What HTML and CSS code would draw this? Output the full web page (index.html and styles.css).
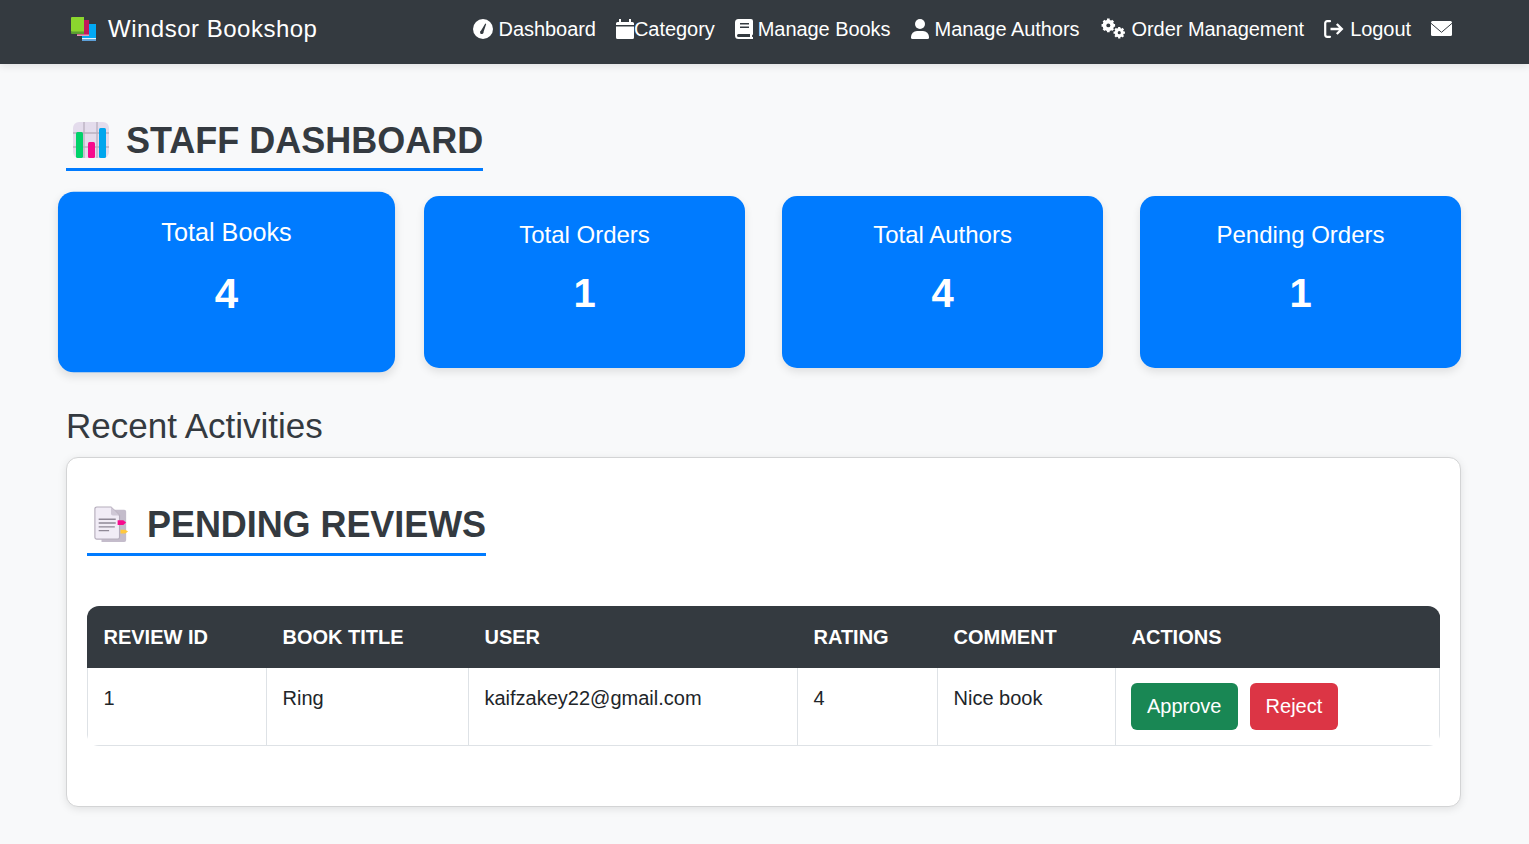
FILE: index.html
```html
<!DOCTYPE html>
<html lang="en">
<head>
    <meta charset="UTF-8">
    <meta name="viewport" content="width=device-width, initial-scale=1.0">
    <title>Staff Dashboard - Windsor Bookshop</title>
    <link rel="stylesheet" href="styles.css">
</head>
<body>
    <nav class="navbar">
        <a class="brand" href="#">
            <svg class="brand-icon" viewBox="0 0 25 24">
                <path fill="#03a9f4" d="M11 7h14v15.500H11z"/>
                <path fill="#e3f2fd" d="M11 21h14v1.500H11z"/>
                <path fill="#5c9fd8" d="M11 22.500h14V24H11z"/>
                <path fill="#c2185b" d="M6 3h12v16H6z"/>
                <path fill="#e0a0b8" d="M6 17.500h12V19H6z"/>
                <path fill="#8bd62e" d="M1 0h12v15H1a1 1 0 0 1-1-1V1a1 1 0 0 1 1-1z"/>
                <path fill="#5c9e31" d="M0 14.500h13V17H1a1 1 0 0 1-1-1z"/>
            </svg>
            Windsor Bookshop
        </a>
        <ul class="nav-links">
            <li>
                <a href="#">
                    <svg class="icon icon-gauge" viewBox="0 0 20 20"><circle cx="10" cy="10" r="10" fill="#fff"/><path fill="#343a40" d="M8.100 11.600 12.300 4.600l.9.400-2.600 7.800a1.800 1.800 0 1 1-2.500-1.200z"/></svg>
                    Dashboard
                </a>
            </li>
            <li>
                <a href="#">
                    <svg class="icon icon-cal" viewBox="0 0 18 20"><path fill="#fff" d="M3 0h2v3h8V0h2v3h1.500A1.500 1.500 0 0 1 18 4.500V6H0V4.500A1.500 1.500 0 0 1 1.500 3H3zM0 7.500h18v11a1.500 1.500 0 0 1-1.500 1.500h-15A1.500 1.500 0 0 1 0 18.500z"/></svg>
                    Category
                </a>
            </li>
            <li>
                <a href="#">
                    <svg class="icon icon-book" viewBox="0 0 18 20"><path fill="#fff" fill-rule="evenodd" d="M3.500 0H16a2 2 0 0 1 2 2v13.500l-.9.500v2h.9v2H3.500A3.500 3.500 0 0 1 0 16.500v-13A3.500 3.500 0 0 1 3.500 0zM5 4v1.500h9V4zm0 3.500V9h9V7.500zM3.500 15a1.500 1.500 0 0 0 0 3H15v-3z"/></svg>
                    Manage Books
                </a>
            </li>
            <li>
                <a href="#">
                    <svg class="icon icon-user" viewBox="0 0 18 20"><circle cx="9" cy="5" r="5" fill="#fff"/><path fill="#fff" d="M6 12h6a6 6 0 0 1 6 6v.500a1.500 1.500 0 0 1-1.500 1.500h-15A1.500 1.500 0 0 1 0 18.500V18a6 6 0 0 1 6-6z"/></svg>
                    Manage Authors
                </a>
            </li>
            <li>
                <a href="#">
                    <svg class="icon icon-cogs" viewBox="0 0 25 20">
                        <circle cx="8" cy="7" r="4" fill="none" stroke="#fff" stroke-width="3"/>
                        <path stroke="#fff" stroke-width="2.600" d="M8 .500v13M1.500 7h13M3.400 2.400l9.200 9.200M12.600 2.400l-9.200 9.200"/>
                        <circle cx="8" cy="7" r="1.900" fill="#343a40"/>
                        <circle cx="18.500" cy="14" r="3.100" fill="none" stroke="#fff" stroke-width="2.600"/>
                        <path stroke="#fff" stroke-width="2.200" d="M18.500 8.500v11M13 14h11M14.600 10.100l7.800 7.800M22.400 10.100l-7.800 7.800"/>
                        <circle cx="18.500" cy="14" r="1.500" fill="#343a40"/>
                    </svg>
                    Order Management
                </a>
            </li>
            <li>
                <a href="#">
                    <svg class="icon icon-logout" viewBox="0 0 20 18"><path fill="none" stroke="#fff" stroke-width="2.200" stroke-linecap="round" d="M6 1.200H3.200a2 2 0 0 0-2 2v11.600a2 2 0 0 0 2 2H6"/><path fill="none" stroke="#fff" stroke-width="2.400" d="M6.500 9h11.300M12.800 4l5 5-5 5"/></svg>
                    Logout
                </a>
            </li>
            <li>
                <a href="#" aria-label="Messages">
                    <svg class="icon-mail" viewBox="0 0 21 15"><rect width="21" height="15" rx="1.500" fill="#fff"/><path fill="none" stroke="#343a40" d="M0 2.300l10.500 9 10.500-9"/></svg>
                </a>
            </li>
        </ul>
    </nav>

    <main class="content">
        <h2 class="section-title">
            <svg class="title-icon" viewBox="0 0 36 36">
                <rect width="36" height="36" rx="6" fill="#e4dcec"/>
                <path stroke="#b9b0bf" stroke-width="1.300" d="M11 0v36M24 0v36M0 11h36M0 25h36"/>
                <rect x="3" y="10" width="7" height="26" rx="1.500" fill="#00d26a"/>
                <rect x="15" y="20" width="7" height="16" rx="1.500" fill="#f70a8d"/>
                <rect x="26" y="6" width="7" height="30" rx="1.500" fill="#00a6ed"/>
            </svg>
            Staff Dashboard
        </h2>

        <section class="stats">
            <div class="stat-card stat-card-hover">
                <h3>Total Books</h3>
                <p>4</p>
            </div>
            <div class="stat-card">
                <h3>Total Orders</h3>
                <p>1</p>
            </div>
            <div class="stat-card">
                <h3>Total Authors</h3>
                <p>4</p>
            </div>
            <div class="stat-card">
                <h3>Pending Orders</h3>
                <p>1</p>
            </div>
        </section>

        <h3 class="recent-title">Recent Activities</h3>

        <section class="panel">
            <h2 class="section-title">
                <svg class="title-icon" viewBox="0 0 36 38">
                    <path fill="#c4bccb" d="M8 4h24a2 2 0 0 1 2 2v30a2 2 0 0 1-2 2H8z"/>
                    <path fill="#f1ecf6" stroke="#b5adbc" stroke-width="1.200" d="M3 1h15l9 9v23a2 2 0 0 1-2 2H3a2 2 0 0 1-2-2V3a2 2 0 0 1 2-2z"/>
                    <path fill="#cfc8d6" d="M18 1l9 9h-7a2 2 0 0 1-2-2z"/>
                    <path stroke="#8f8896" stroke-width="1.500" d="M5 14h18M5 18h18M5 22h17M5 26h11"/>
                    <path fill="#f70a8d" d="M25 15h6l3 2.500-3 2.500h-6z"/>
                    <path fill="#ffc83d" d="M28 25h5l3 2-3 2h-5z"/>
                </svg>
                Pending Reviews
            </h2>

            <table class="reviews">
                <colgroup>
                    <col class="col-id">
                    <col class="col-book">
                    <col class="col-user">
                    <col class="col-rating">
                    <col class="col-comment">
                    <col>
                </colgroup>
                <thead>
                    <tr>
                        <th>Review ID</th>
                        <th>Book Title</th>
                        <th>User</th>
                        <th>Rating</th>
                        <th>Comment</th>
                        <th>Actions</th>
                    </tr>
                </thead>
                <tbody>
                    <tr>
                        <td>1</td>
                        <td>Ring</td>
                        <td>kaifzakey22@gmail.com</td>
                        <td>4</td>
                        <td>Nice book</td>
                        <td class="actions">
                            <button class="btn btn-approve">Approve</button>
                            <button class="btn btn-reject">Reject</button>
                        </td>
                    </tr>
                </tbody>
            </table>
        </section>
    </main>
</body>
</html>
```

FILE: styles.css
```css
* {
    box-sizing: border-box;
}
body {
    font-family: "Liberation Sans", Arial, sans-serif;
    font-size: 20px;
    line-height: 1.5;
    background-color: #f8f9fa;
    color: #212529;
    margin: 0;
}
a {
    color: #fff;
    text-decoration: none;
}

.navbar {
    display: flex;
    align-items: center;
    justify-content: space-between;
    height: 64px;
    padding: 0 77px 7px 71px;
    background-color: #343a40;
    box-shadow: 0 2px 8px rgba(0, 0, 0, 0.1);
}
.brand {
    display: flex;
    align-items: center;
    font-size: 24px;
    letter-spacing: 0.5px;
    gap: 12px;
}
.brand-icon {
    width: 25px;
    height: 24px;
}
.nav-links {
    display: flex;
    align-items: center;
    gap: 20px;
    list-style: none;
    margin: 0;
    padding: 0;
    letter-spacing: -0.05px;
}
.nav-links a {
    display: flex;
    align-items: center;
}
.icon {
    height: 20px;
    margin-right: 6px;
}
.icon-gauge { width: 20px; }
.icon-cal { width: 18px; margin-right: 0; }
.icon-book { width: 18px; margin-right: 5px; }
.icon-user { width: 18px; }
.icon-cogs { width: 26px; height: 21px; }
.icon-logout { width: 20px; height: 18px; }
.icon-mail {
    width: 21px;
    height: 15px;
}

.content {
    padding: 55px 68px 37px 66px;
}
.section-title {
    display: inline-flex;
    align-items: center;
    gap: 17px;
    margin: 0;
    padding: 0 0 6px 7px;
    font-size: 36px;
    line-height: 43px;
    font-weight: 700;
    text-transform: uppercase;
    color: #343a40;
    border-bottom: 3px solid #007bff;
}
.title-icon {
    width: 36px;
    height: 36px;
    margin-bottom: 2px;
}

.stats {
    display: grid;
    grid-template-columns: repeat(4, 1fr);
    gap: 37px;
    margin-top: 25px;
}
.stat-card {
    height: 171.500px;
    padding: 20px;
    text-align: center;
    color: #fff;
    background-color: #007bff;
    border-radius: 15px;
    box-shadow: 0 4px 8px rgba(0, 0, 0, 0.1);
}
.stat-card-hover {
    transform: scale(1.05);
}
.stat-card h3 {
    margin: 0;
    font-size: 24px;
    line-height: 38px;
    font-weight: 400;
}
.stat-card p {
    margin: 15px 0 0;
    font-size: 40px;
    line-height: 48px;
    font-weight: 700;
}

.recent-title {
    margin: 37.500px 0 10px;
    font-size: 35px;
    line-height: 42px;
    font-weight: 400;
    color: #343a40;
}

.panel {
    height: 350px;
    padding: 45px 20px 0;
    background-color: #fff;
    border: 1px solid #d3d4d5;
    border-radius: 12px;
    box-shadow: 0 2px 8px rgba(0, 0, 0, 0.1);
}
.panel .section-title {
    gap: 18px;
    padding: 0 0 7px 6px;
    letter-spacing: -0.07px;
}

.reviews {
    width: 100%;
    margin-top: 50px;
    table-layout: fixed;
    border-collapse: collapse;
    border-radius: 12px;
    overflow: hidden;
}
.col-id { width: 179px; }
.col-book { width: 202px; }
.col-user { width: 329px; }
.col-rating { width: 140px; }
.col-comment { width: 178px; }
.reviews th {
    height: 61px;
    padding: 0 16px 0 15.500px;
    text-align: left;
    font-weight: 700;
    text-transform: uppercase;
    color: #fff;
    background-color: #343a40;
    border: 1px solid #343a40;
}
.reviews td {
    height: 77px;
    padding: 15px 16px 15px 15.500px;
    vertical-align: top;
    background-color: #fff;
    border: 1px solid #dee2e6;
}
.reviews td.actions {
    padding-left: 15px;
}
.btn {
    height: 47px;
    padding: 0 16px;
    font-family: inherit;
    font-size: 20px;
    color: #fff;
    border: none;
    border-radius: 6px;
    cursor: pointer;
}
.btn-approve {
    background-color: #198754;
}
.btn-reject {
    margin-left: 7px;
    padding: 0 15.500px;
    background-color: #dc3545;
}
```
